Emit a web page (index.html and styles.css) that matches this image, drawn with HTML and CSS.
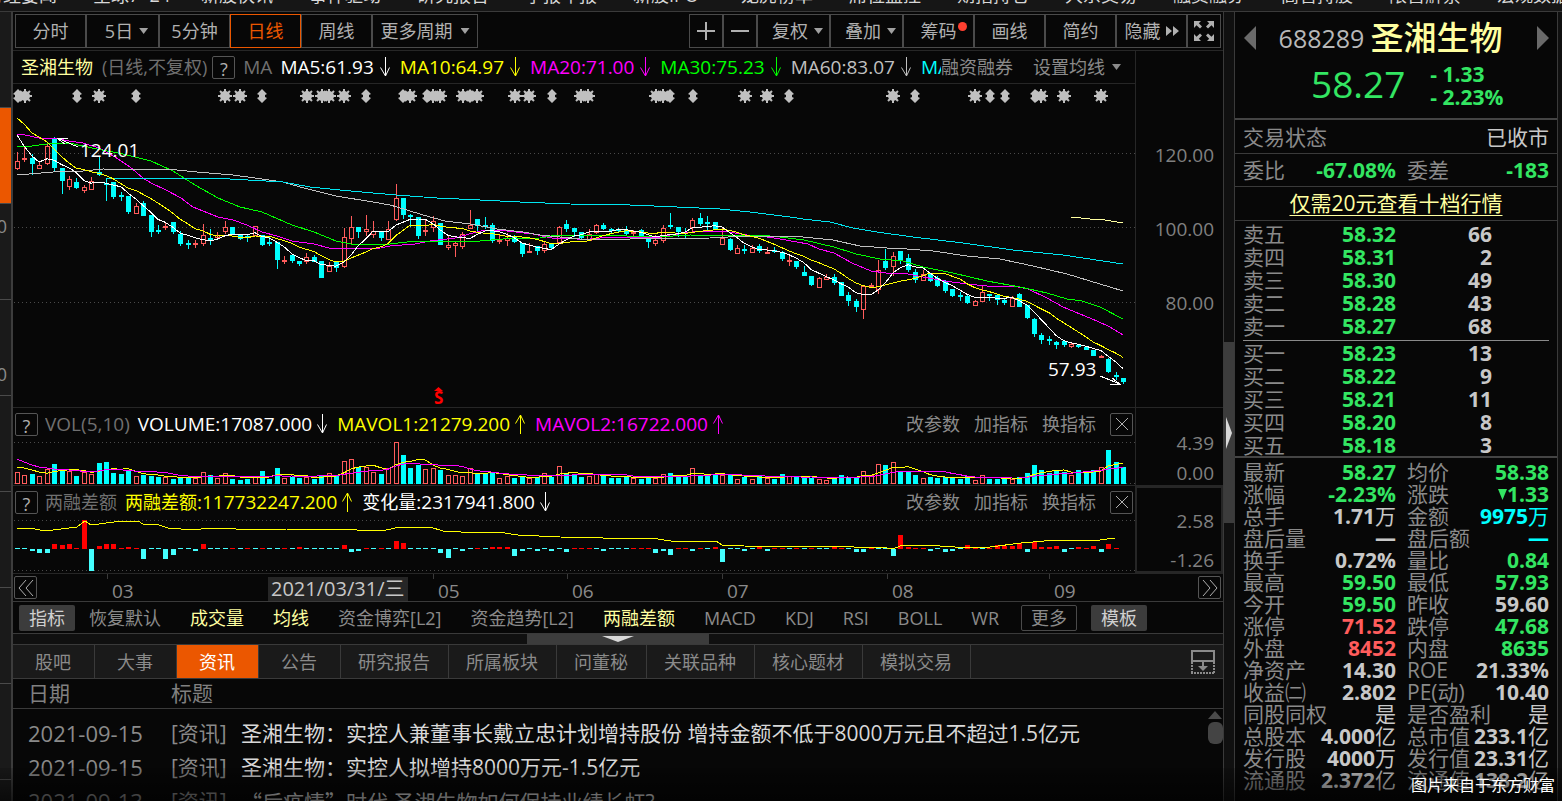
FILE: index.html
```html
<!DOCTYPE html>
<html lang="zh-CN">
<head>
<meta charset="utf-8">
<title>圣湘生物 688289</title>
<link rel="stylesheet" href="styles.css">
</head>
<body>
<svg class="defs" aria-hidden="true">
  <symbol id="down" viewBox="0 0 10 20"><path d="M5.5 0V19M.5 10.500L5.500 19L9.500 10.500"/></symbol>
  <symbol id="up" viewBox="0 0 10 20"><path d="M5.500 20V1M.5 9.500L5.500 1L9.500 9.500"/></symbol>
</svg>
<nav class="topnav">
  <a href="#">财经要闻</a><a href="#">全球7×24</a><a href="#">新股快讯</a><a href="#">事件驱动</a><a href="#">研究报告</a><a href="#">季报年报</a><a href="#">新股IPO</a><a href="#">龙虎榜单</a><a href="#">席位监控</a><a href="#">期指持仓</a><a href="#">大宗交易</a><a href="#">融资融券</a><a href="#">高管持股</a><a href="#">限售解禁</a><a href="#">宏观数据</a>
</nav>
<div class="app">
  <aside class="rail"><i></i><i class="on"></i><i>0</i><i class="low">0</i><i></i><i></i><i></i><i></i></aside>

  <main class="main">
    <div class="toolbar">
      <div class="group">
        <button class="tb">分时</button>
        <button class="tb wide">5日<span class="caret"></span></button>
        <button class="tb">5分钟</button>
        <button class="tb active">日线</button>
        <button class="tb">周线</button>
        <button class="tb more">更多周期<span class="caret"></span></button>
      </div>
      <div class="group">
        <button class="tb sq" aria-label="放大"><svg width="18" height="18"><path d="M9 0V18M0 9H18"/></svg></button>
        <button class="tb sq" aria-label="缩小"><svg width="18" height="18"><path d="M0 9H18"/></svg></button>
        <button class="tb wide">复权<span class="caret"></span></button>
        <button class="tb wide">叠加<span class="caret"></span></button>
        <button class="tb">筹码<span class="dot"></span></button>
        <button class="tb">画线</button>
        <button class="tb">简约</button>
        <button class="tb hide">隐藏<svg class="ff" width="14" height="12"><path d="M1 1L7 6L1 11zM8 1L14 6L8 11z"/></svg></button>
        <button class="tb sq" aria-label="全屏"><svg class="full" width="20" height="20"><path d="M0 0H7L4.800 2.200L8 5.400L6 7.400L2.500 4.300L0 7zM20 0H13L15.200 2.200L12 5.400L14 7.400L17.500 4.300L20 7zM0 20H7L4.800 17.800L8 14.600L6 12.600L2.500 15.700L0 13zM20 20H13L15.200 17.800L12 14.600L14 12.600L17.500 15.700L20 13z"/></svg></button>
      </div>
    </div>

    <section class="panel price">
      <div class="plot">
        <div class="info">
          <span class="name">圣湘生物</span><span class="mode">(日线,不复权)</span>
          <button class="box">?</button>
          <div class="series">
            <span class="lab">MA</span>
            <span class="c-white">MA5:61.93<svg class="ar"><use href="#down"/></svg></span>
            <span class="c-yellow">MA10:64.97<svg class="ar"><use href="#down"/></svg></span>
            <span class="c-magenta">MA20:71.00<svg class="ar"><use href="#down"/></svg></span>
            <span class="c-green">MA30:75.23<svg class="ar"><use href="#down"/></svg></span>
            <span class="c-grey">MA60:83.07<svg class="ar"><use href="#down"/></svg></span>
            <span class="c-cyan">MA120</span>
          </div>
          <a href="#">融资融券</a><a href="#" class="setma">设置均线<span class="caret"></span></a>
        </div>
        <svg id="price" class="chart" viewBox="13 84 1122 323"></svg>
      </div>
      <div class="axis a1"><span>120.00</span><span>100.00</span><span>80.00</span></div>
    </section>

    <section class="panel">
      <div class="plot">
        <div class="info sub">
          <button class="box">?</button>
          <div class="series">
            <span class="lab">VOL(5,10)</span>
            <span class="c-white">VOLUME:17087.000<svg class="ar"><use href="#down"/></svg></span>
            <span class="c-yellow">MAVOL1:21279.200<svg class="ar"><use href="#up"/></svg></span>
            <span class="c-magenta">MAVOL2:16722.000<svg class="ar"><use href="#up"/></svg></span>
          </div>
          <a href="#">改参数</a><a href="#">加指标</a><a href="#">换指标</a>
          <button class="box" aria-label="关闭"><svg width="12" height="12"><path d="M0 0L12 12M12 0L0 12"/></svg></button>
        </div>
        <svg id="volume" class="chart" viewBox="13 440 1122 45"></svg>
      </div>
      <div class="axis a2"><span>4.39</span><span>0.00</span></div>
    </section>

    <section class="panel">
      <div class="plot">
        <div class="info sub">
          <button class="box">?</button>
          <div class="series">
            <span class="lab cn">两融差额</span>
            <span class="c-yellow"><span class="cn">两融差额</span>:117732247.200<svg class="ar"><use href="#up"/></svg></span>
            <span class="c-white"><span class="cn">变化量</span>:2317941.800<svg class="ar"><use href="#down"/></svg></span>
          </div>
          <a href="#">改参数</a><a href="#">加指标</a><a href="#">换指标</a>
          <button class="box" aria-label="关闭"><svg width="12" height="12"><path d="M0 0L12 12M12 0L0 12"/></svg></button>
        </div>
        <svg id="margin" class="chart" viewBox="13 518 1122 55"></svg>
      </div>
      <div class="axis a3"><span>2.58</span><span>-1.26</span></div>
    </section>

    <div class="dates">
      <div class="first"><button class="pg" aria-label="向前"><svg width="16" height="16"><path d="M8 0L1 8L8 16M15 0L8 8L15 16"/></svg></button></div>
      <span class="tick">03</span><div><span class="today">2021/03/31/三</span></div>
      <span class="tick">05</span><span class="tick">06</span><span class="tick">07</span><span class="tick">08</span>
      <div class="tick last">09<button class="pg" aria-label="向后"><svg width="16" height="16"><path d="M1 0L8 8L1 16M8 0L15 8L8 16"/></svg></button></div>
    </div>

    <div class="inds">
      <button class="solid">指标</button>
      <a href="#">恢复默认</a><a href="#" class="on">成交量</a><a href="#" class="on">均线</a><a href="#">资金博弈[L2]</a><a href="#">资金趋势[L2]</a><a href="#" class="on">两融差额</a><a href="#">MACD</a><a href="#">KDJ</a><a href="#">RSI</a><a href="#">BOLL</a><a href="#">WR</a>
      <button class="line">更多</button>
      <button class="solid">模板</button>
    </div>
    <div class="hsplit"><span><svg width="32" height="6"><path d="M0 0H32L16 6z"/></svg></span></div>

    <div class="tabs">
      <button>股吧</button><button>大事</button><button class="on">资讯</button><button>公告</button><button>研究报告</button><button>所属板块</button><button>问董秘</button><button>关联品种</button><button>核心题材</button><button>模拟交易</button>
      <svg class="dock" width="24" height="24"><path d="M1 1H23V11H1z" stroke-width="2"/><path d="M1 12V24M23 12V24M0 23H24" stroke-width="2" stroke-dasharray="2 1"/><path d="M12 11V17" stroke-width="2"/><path class="fill" d="M7 16H17L12 21z"/></svg>
    </div>
    <div class="news">
      <table>
        <thead><tr><th class="d">日期</th><th class="k">标题</th><th></th></tr></thead>
        <tbody>
          <tr><td class="d">2021-09-15</td><td class="k">[资讯]</td><td><a href="#">圣湘生物：实控人兼董事长戴立忠计划增持股份 增持金额不低于8000万元且不超过1.5亿元</a></td></tr>
          <tr><td class="d">2021-09-15</td><td class="k">[资讯]</td><td><a href="#">圣湘生物：实控人拟增持8000万元-1.5亿元</a></td></tr>
          <tr><td class="d">2021-09-13</td><td class="k">[资讯]</td><td><a href="#"><span class="quo">“后疫情”</span>时代 圣湘生物如何保持业绩长虹?</a></td></tr>
        </tbody>
      </table>
      <div class="scroll"><svg width="14" height="8"><path d="M7 0L14 8H0z"/></svg><span></span></div>
    </div>
  </main>

  <div class="vsplit"><span><svg width="6" height="32"><path d="M0 0L6 16L0 32z"/></svg></span></div>

  <aside class="quote">
    <header class="qhead">
      <div class="title">
        <button class="nav" aria-label="上一只"><svg width="12" height="24"><path d="M12 0V24L0 12z"/></svg></button>
        <span><span class="code">688289</span><span class="big">圣湘生物</span></span>
        <button class="nav" aria-label="下一只"><svg width="12" height="24"><path d="M0 0V24L12 12z"/></svg></button>
      </div>
      <div class="now"><span class="last-price">58.27</span><span class="chg">- 1.33<br>- 2.23%</span></div>
    </header>
    <div class="qbody">
      <div class="row"><span>交易状态</span><span class="v">已收市</span></div>
      <div class="row pairs"><div><span>委比</span><b class="g">-67.08%</b></div><div><span>委差</span><b class="g">-183</b></div></div>
      <div class="row promo"><a href="#">仅需20元查看十档行情</a></div>
      <table class="book">
        <tbody>
          <tr><td>卖五</td><td class="g">58.32</td><td>66</td></tr>
          <tr><td>卖四</td><td class="g">58.31</td><td>2</td></tr>
          <tr><td>卖三</td><td class="g">58.30</td><td>49</td></tr>
          <tr><td>卖二</td><td class="g">58.28</td><td>43</td></tr>
          <tr><td>卖一</td><td class="g">58.27</td><td>68</td></tr>
        </tbody>
      </table>
      <hr>
      <table class="book buy">
        <tbody>
          <tr><td>买一</td><td class="g">58.23</td><td>13</td></tr>
          <tr><td>买二</td><td class="g">58.22</td><td>9</td></tr>
          <tr><td>买三</td><td class="g">58.21</td><td>11</td></tr>
          <tr><td>买四</td><td class="g">58.20</td><td>8</td></tr>
          <tr><td>买五</td><td class="g">58.18</td><td>3</td></tr>
        </tbody>
      </table>
      <dl class="stats">
        <div><dt>最新</dt><dd class="g">58.27</dd></div><div><dt>均价</dt><dd class="g">58.38</dd></div>
        <div><dt>涨幅</dt><dd class="g">-2.23%</dd></div><div><dt>涨跌</dt><dd class="g"><svg width="9" height="11"><path d="M0 0H9L4.500 11z"/></svg>1.33</dd></div>
        <div><dt>总手</dt><dd>1.71<i>万</i></dd></div><div><dt>金额</dt><dd class="c">9975<i>万</i></dd></div>
        <div><dt>盘后量</dt><dd>—</dd></div><div><dt>盘后额</dt><dd class="c">—</dd></div>
        <div><dt>换手</dt><dd>0.72%</dd></div><div><dt>量比</dt><dd class="g">0.84</dd></div>
        <div><dt>最高</dt><dd class="g">59.50</dd></div><div><dt>最低</dt><dd class="g">57.93</dd></div>
        <div><dt>今开</dt><dd class="g">59.50</dd></div><div><dt>昨收</dt><dd>59.60</dd></div>
        <div><dt>涨停</dt><dd class="r">71.52</dd></div><div><dt>跌停</dt><dd class="g">47.68</dd></div>
        <div><dt>外盘</dt><dd class="r">8452</dd></div><div><dt>内盘</dt><dd class="g">8635</dd></div>
        <div><dt>净资产</dt><dd>14.30</dd></div><div><dt>ROE</dt><dd>21.33%</dd></div>
        <div><dt>收益㈡</dt><dd>2.802</dd></div><div><dt>PE(动)</dt><dd>10.40</dd></div>
        <div><dt>同股同权</dt><dd><i>是</i></dd></div><div><dt>是否盈利</dt><dd><i>是</i></dd></div>
        <div><dt>总股本</dt><dd>4.000<i>亿</i></dd></div><div><dt>总市值</dt><dd>233.1<i>亿</i></dd></div>
        <div><dt>发行股</dt><dd>4000<i>万</i></dd></div><div><dt>发行值</dt><dd>23.31<i>亿</i></dd></div>
        <div><dt>流通股</dt><dd>2.372<i>亿</i></dd></div><div><dt>流通值</dt><dd>138.2<i>亿</i></dd></div>
      </dl>
    </div>
  </aside>
  <div class="edge"></div>
</div>
<div class="shade"></div>
<div class="credit">图片来自于东方财富</div>
<script src="charts.js"></script>
</body>
</html>
```

FILE: styles.css
```css
* { box-sizing: border-box; }
html, body { height: 100%; }
body {
  margin: 0;
  overflow: hidden;
  display: flex;
  flex-direction: column;
  position: relative;
  background: #070707;
  color: #8a8a8a;
  font: 18px/24px "Open Sans", "Noto Sans CJK SC", sans-serif;
}
a { color: inherit; text-decoration: none; }
button {
  margin: 0;
  padding: 0;
  border: 0;
  background: none;
  color: inherit;
  font: inherit;
  white-space: nowrap;
}
svg { display: block; flex: none; fill: none; stroke: currentColor; }
.defs { position: absolute; width: 0; height: 0; }

.topnav {
  flex: none;
  display: flex;
  align-items: flex-end;
  gap: 36px;
  height: 12px;
  padding-bottom: 4px;
  overflow: hidden;
  background: #161616;
  border-bottom: 1px solid #3a3a3a;
  color: #d8d8d8;
}
.topnav a { flex: none; width: 72px; white-space: nowrap; }
.topnav a:first-child { margin-left: -15px; }

.app { flex: 1; min-height: 0; display: flex; overflow: hidden; }

.rail { flex: none; width: 13px; background: #1a1a1a; border-right: 2px solid #3c3c3c; overflow: hidden; }
.rail i {
  display: block;
  height: 96px;
  padding-top: 10px;
  border-bottom: 1px solid #4a4a4a;
  font-style: normal;
  direction: rtl;
  padding-right: 4px;
}
.rail .low { padding-top: 62px; }
.rail .on { background: #eb5700; }

.main { flex: 1; min-width: 0; }

.toolbar {
  display: flex;
  justify-content: space-between;
  padding: 2px;
  height: 39px;
  border-bottom: 1px solid #262626;
}
.group { display: flex; }
.tb {
  display: flex;
  align-items: center;
  justify-content: center;
  position: relative;
  width: 71px;
  height: 34px;
  border: 1px solid #4a4a4a;
  color: #b0b0b0;
}
.tb svg { stroke-width: 2; }
.tb .full, .tb .ff { fill: currentColor; stroke: none; }
.tb.wide { width: 73px; gap: 6px; padding-left: 8px; }
.tb.more { width: 106px; gap: 8px; }
.tb.sq { width: 34px; }
.tb.hide { gap: 4px; }
.tb.active { border-color: #eb5700; color: #eb5700; }
.caret {
  width: 9px;
  height: 6px;
  background: #a0a0a0;
  clip-path: polygon(0 0, 100% 0, 50% 100%);
}
.dot {
  position: absolute;
  top: 7px;
  right: 6px;
  width: 9px;
  height: 9px;
  border-radius: 50%;
  background: #ff4030;
}

.panel { display: flex; border-bottom: 1px solid #262626; }
.plot { flex: 1; min-width: 0; }
.info {
  display: flex;
  align-items: center;
  height: 33px;
  padding: 0 14px 0 8px;
  border-bottom: 1px solid #262626;
  font-size: 18px;
  white-space: nowrap;
}
.info.sub { height: 32px; padding: 0 2px; border-bottom: 0; gap: 14px; }
.name { color: #ffffa0; }
.mode { margin: 0 5px 0 9px; color: #707070; }
.box {
  flex: none;
  display: grid;
  place-items: center;
  width: 23px;
  height: 23px;
  border: 1px solid #555;
  border-radius: 2px;
  color: #b0b0b0;
}
.series {
  flex: 1;
  min-width: 0;
  display: flex;
  gap: 10px;
  margin-left: 8px;
  overflow: hidden;
  font-size: 19px;
}
.sub .series { margin-left: -7px; }
.series > span { flex: none; display: flex; align-items: center; }
.cn { font-size: 18px; }
.lab { color: #707070; margin-right: -2px; }
.ar { width: 10px; height: 20px; margin-left: 6px; }
.sub .ar { margin-left: 5px; }
.setma { display: flex; align-items: center; gap: 7px; margin-left: 20px; }
.setma .caret { background: #8a8a8a; }
.c-white { color: #fff; }
.c-yellow { color: #ff0; }
.c-magenta { color: #f0f; }
.c-green { color: #0f0; }
.c-grey { color: #c0c0c0; }
.c-cyan { color: #0ff; }

.chart { width: 100%; height: auto; }
.chart text { fill: #fff; stroke: none; font-size: 19px; }
.chart .crisp { shape-rendering: crispEdges; }
.chart .grid { stroke: #4a4a4a; stroke-dasharray: 1 3; }
.chart .note { stroke: #fff; }
.chart .mark { fill: #c0c0c0; stroke: none; }
.chart .spoke { stroke: #c0c0c0; }
.chart .ex { fill: #f00; font-size: 17px; font-weight: 700; }
.chart .up { stroke: #ff5c5c; }
.chart .dn { stroke: #0ff; fill: #0ff; }
.chart .pos { fill: #f00; stroke: none; }
.chart .neg { fill: #4ff; stroke: none; }

.axis {
  flex: none;
  display: flex;
  flex-direction: column;
  width: 88px;
  padding-right: 9px;
  border-left: 1px solid #262626;
  font-size: 19px;
  text-align: right;
  color: #808080;
}
.a1 { padding-top: 92px; gap: 50px; }
.a2 { padding-top: 23px; gap: 6px; }
.a3 { padding-top: 23px; gap: 19px; padding-right: 7px; border: 2px solid #262626; line-height: 20px; }

.dates {
  display: grid;
  grid-template-columns: 94fr 161fr 165fr 134fr 155fr 165fr 162fr 174fr;
  height: 28px;
  border-bottom: 1px solid #3a3a3a;
  font-size: 19px;
}
.tick {
  padding: 5px 0 0 5px;
  background: linear-gradient(#3a3a3a, #3a3a3a) 0 0 / 1px 5px no-repeat;
}
.today {
  display: inline-block;
  margin-top: 3px;
  height: 24px;
  line-height: 24px;
  padding: 0 3px;
  font-size: 20px;
  background: #262626;
  color: #c8c8c8;
}
.first { padding: 2px 1px; }
.last { display: flex; justify-content: space-between; padding: 5px 2px 0 5px; }
.pg {
  display: grid;
  place-items: center;
  width: 23px;
  height: 23px;
  border: 1px solid #555;
  border-radius: 2px;
  color: #b0b0b0;
}
.last .pg { margin-top: -3px; }

.inds {
  display: flex;
  align-items: center;
  gap: 29px;
  height: 32px;
  padding-left: 6px;
  border-bottom: 1px solid #3a3a3a;
  white-space: nowrap;
}
.inds .on { color: #ffffa0; }
.inds button { width: 56px; height: 26px; border-radius: 2px; }
.solid { background: #3c3c3c; color: #d0d0d0; }
.solid + a, .line + .solid { margin-left: -15px; }
.line { margin-left: -7px; border: 1px solid #4a4a4a; }

.hsplit { display: flex; justify-content: center; height: 11px; background: #101010; border-bottom: 1px solid #3a3a3a; }
.hsplit span { display: flex; justify-content: center; width: 15%; padding-top: 2px; background: #3c3c3c; }
.hsplit svg, .vsplit svg { fill: #d8d8d8; stroke: none; }

.tabs { display: flex; align-items: center; height: 34px; background: #1a1a1a; border-bottom: 1px solid #3a3a3a; }
.tabs button { height: 33px; min-width: 82px; padding: 0 18px 0 17px; border-right: 1px solid #3a3a3a; }
.tabs .on { background: #eb5700; color: #fff; }
.dock { margin: 0 8px 0 auto; }
.dock .fill { fill: currentColor; stroke: none; }

.news { display: flex; font-size: 21px; }
.news table { flex: 1; border-collapse: collapse; white-space: nowrap; }
.news th, .news td { padding: 0; height: 34px; text-align: left; font-weight: 400; }
.news thead { border-bottom: 1px solid #3a3a3a; }
.news th { height: 29px; color: #808080; }
.news tbody tr:first-child td { height: 42px; padding-top: 8px; }
.news td.d { font-size: 22px; }
.news .d { width: 158px; padding-left: 15px; }
.news .k { width: 70px; }
.news td a { color: #d8d8d8; }
.quo { font-family: "Noto Sans CJK SC", sans-serif; }
.scroll { width: 15px; margin: 32px 0 0 -15px; }
.scroll svg { fill: #4a4a4a; stroke: none; }
.scroll span { display: block; height: 22px; margin-top: 3px; border-radius: 6px; background: #444; }

.vsplit {
  flex: none;
  width: 12px;
  padding-top: 330px;
  background: #101010;
  border: 1px solid #3a3a3a;
  border-width: 0 1px;
}
.vsplit span { display: flex; align-items: center; justify-content: center; height: 181px; background: #3c3c3c; }

.quote { flex: none; width: 323px; font-size: 21px; background: #070707; border-right: 1px solid #3a3a3a; }
.qhead { height: 108px; border-bottom: 2px solid #444; }
.title { display: flex; align-items: center; justify-content: space-between; height: 51px; padding: 0 8px 0 9px; }
.title > span { display: flex; align-items: center; gap: 6px; margin-right: 12px; }
.nav svg { fill: #6a6a6a; stroke: none; }
.code { font-size: 25px; color: #b8b8b8; }
.big { font-size: 33px; font-weight: 500; line-height: 48px; color: #ffffa0; }
.now { display: flex; align-items: center; gap: 25px; padding-left: 76px; }
.last-price { font-size: 37px; line-height: 40px; padding-bottom: 4px; color: #33e562; font-weight: 500; }
.chg { font-weight: 700; line-height: 23px; color: #33e562; }
.row {
  display: flex;
  align-items: center;
  justify-content: space-between;
  height: 33px;
  padding: 0 8px;
  border-bottom: 1px solid #3a3a3a;
}
.row:first-child { height: 34px; }
.row .v { color: #c8c8c8; }
.row.promo { justify-content: center; height: 34px; padding-bottom: 2px; }
.promo a { color: #ffffa0; text-decoration: underline; text-underline-offset: 4px; text-decoration-thickness: 1px; }
.pairs, .stats { display: grid; grid-template-columns: 153fr 142fr; column-gap: 11px; }
.pairs div, .stats div { display: flex; justify-content: space-between; }
.book { width: calc(100% - 73px); margin-left: 8px; border-collapse: collapse; table-layout: fixed; line-height: 23px; }
.book td { padding: 0; text-align: right; font-weight: 700; color: #c8c8c8; }
.book td:first-child { width: 62px; text-align: left; font-weight: 400; color: #8a8a8a; }
.book td:nth-child(2) { width: 91px; }
.book:not(.buy) { margin-top: 2px; }
.qbody hr { height: 1px; margin: 2px 8px 1px; border: 0; background: #8a8a8a; }
.buy { margin-bottom: -1px; }
.stats { margin: 0; padding: 3px 8px 0; border-top: 2px solid #444; line-height: 22px; }
.stats dd { display: flex; align-items: center; margin: 0; font-weight: 700; color: #c8c8c8; }
.stats i { font-style: normal; font-weight: 400; }
.stats svg { fill: currentColor; stroke: none; }
.quote .g { color: #33e562; }
.quote .r { color: #ff5c5c; }
.quote .c { color: #0ff; }
.edge { flex: none; width: 4px; background: #101010; }

.shade {
  position: absolute;
  inset: auto 0 0 0;
  height: 33px;
  background: linear-gradient(rgba(0, 0, 0, .15), rgba(0, 0, 0, .6));
  pointer-events: none;
}
.credit { position: absolute; right: 7px; bottom: 4px; font-size: 16px; color: #fff; }
```

FILE: charts.js
```js
// Each candle: direction, then high, body top, body bottom and low in chart units.
const candles = `R152,161,169,170 R147,158,159,162 C154,158,164,175 R161,165,169,169 R142,146,164,165 C137,138,168,171 C168,168,181,194 R176,179,187,190 C178,182,188,189 R185,187,191,193
R177,181,190,190 C157,172,175,176 C178,183,185,201 C182,182,197,199 C192,195,196,201 C196,196,212,214 R203,206,214,214 C201,203,216,216 C215,215,232,237 C225,230,231,234
R223,226,228,230 C222,222,232,234 C231,234,244,246 C240,243,244,249 R240,243,244,248 R224,235,244,246 C229,238,239,245 R232,235,238,238 R221,227,232,234 C227,227,235,235
C235,235,239,240 C235,236,237,242 R226,226,236,236 C235,235,245,246 C237,242,243,246 C242,242,260,269 R256,260,261,264 C255,255,261,263 C261,261,264,266 R253,257,262,264
C255,257,262,262 C261,261,278,278 R262,266,272,272 C261,261,268,272 R228,237,267,268 R216,227,239,245 C227,227,232,238 R215,229,232,236 R221,231,235,238 C231,231,238,241
R221,229,240,240 R184,198,220,221 C198,198,215,219 C214,215,217,227 C217,217,236,239 R219,230,231,236 R216,221,228,232 C223,223,245,245 R236,245,248,250 R242,243,246,257
R232,234,247,249 R210,225,229,229 C219,219,226,231 C217,225,227,229 C223,225,241,243 R235,240,241,244 R233,238,241,246 C235,237,242,243 C243,243,254,257 R243,251,252,252
C246,246,251,255 R242,244,251,253 C243,243,248,249 R226,227,243,243 C220,224,229,232 C228,228,232,237 C232,232,238,239 R229,234,241,241 R224,225,233,234 C223,225,229,230
C228,229,230,234 C228,229,230,233 C226,230,234,235 R230,232,234,236 C229,230,236,237 C239,239,242,248 R235,240,244,246 R225,228,241,243 C213,225,227,229 C227,227,232,237
C228,232,233,238 R218,220,228,232 C213,218,224,226 C216,222,223,230 C222,222,229,230 R227,238,245,245 C238,239,250,251 R245,248,254,254 C245,249,251,254 R245,248,253,253
C244,246,251,253 R247,252,253,253 C247,250,252,253 C251,252,259,261 R256,260,262,266 C261,261,267,269 C266,272,276,276 C276,276,285,286 R277,278,288,288 R274,277,280,280
C274,277,283,285 C282,282,296,296 C292,295,301,306 C299,301,307,312 R285,286,310,319 R283,285,287,288 R260,270,290,294 C249,261,268,270 R252,256,267,276 C251,251,260,264
C254,258,270,272 C269,272,280,283 R270,274,281,281 C273,274,281,282 C276,278,286,287 C280,281,291,293 C289,289,296,297 C292,295,296,301 C295,296,303,304 R300,301,306,306
R286,292,302,302 C294,294,295,301 C295,295,300,305 C299,300,303,305 R296,298,307,307 C293,294,307,307 C305,305,318,319 C318,319,334,337 C333,335,340,344 C336,339,340,345
C341,342,345,349 C341,341,345,347 R343,344,347,348 C344,345,347,348 C346,347,350,350 C350,350,356,356 R355,356,358,358 C358,359,372,373 C372,375,377,380 C378,378,382,384`
  .split(/\s+/).map(s => [s[0], ...s.slice(1).split(',').map(Number)]);

const volumes = [12,9,10,8,15,20,15,13,8,12,10,21,22,11,10,13,8,9,8,7,7,5,7,6,6,12,9,6,11,5,4,5,8,13,5,16,6,7,6,7,5,9,11,8,23,25,17,17,12,10,16,42,29,16,19,15,16,14,9,9,8,16,10,11,11,6,8,6,7,6,7,11,7,18,11,10,7,8,10,9,6,6,7,6,5,7,6,10,11,8,7,16,9,9,9,9,10,5,7,5,8,6,5,10,8,8,7,6,5,4,7,9,6,7,13,9,20,19,22,13,12,9,6,7,6,7,6,5,8,4,9,5,5,6,5,7,11,19,14,11,14,12,9,14,11,14,17,34,22,17];

const flows = [-1,-1,-2,-4,-4,5,4,5,1,29,-22,3,5,5,1,2,1,-10,-1,-1,-10,-6,-1,-1,-2,5,-1,-1,-1,1,-1,1,-1,1,-1,-1,1,-1,2,-1,-1,-1,-1,-1,4,-3,-2,1,-1,1,-1,8,6,-1,-1,-1,-1,-4,-9,-1,-2,-1,1,-1,2,2,2,-7,-2,-1,-2,-1,-2,-1,-3,1,1,1,-1,-2,-1,-1,-1,1,1,1,-4,-2,-6,1,1,-2,1,-1,2,-13,-1,-1,-2,-1,3,-2,1,1,-1,1,-1,1,-1,-1,3,1,-1,-3,-3,1,-1,-1,-7,14,2,1,1,-2,-1,-3,-2,-1,4,1,-1,1,4,3,3,6,-3,7,2,2,3,-3,-1,2,1,3,-3,5,1];

const lines = {
  ma20: ['#f0f', '17,134 25,135 39,138 54,138 69,141 83,143 99,148 115,157 130,167 143,178 151,183 166,190 181,198 193,207 203,211 218,217 233,220 247,225 262,232 277,236 292,241 314,244 329,248 344,249 381,248 390,246 415,244 430,241 455,238 473,233 485,230 507,231 533,234 552,238 577,239 590,239 610,237 630,237 657,238 670,235 693,232 723,231 747,235 767,237 780,239 797,242 808,244 819,249 834,253 852,263 871,271 886,273 903,273 923,277 945,281 967,284 987,286 1013,286 1028,289 1047,298 1063,307 1080,314 1097,321 1110,327 1123,335'],
  ma30: ['#0f0', '17,147 32,146 47,144 69,143 97,149 123,154 151,161 173,171 195,185 218,198 240,207 262,212 292,225 314,232 336,241 351,244 373,245 390,244 407,242 430,241 480,241 503,239 540,238 557,235 610,235 643,237 673,236 690,235 770,236 780,237 804,240 834,247 856,254 880,259 903,261 923,267 953,273 987,281 1020,287 1047,293 1067,299 1082,301 1100,307 1123,319'],
  ma60: ['#c0c0c0', '17,175 53,172 83,171 103,169 177,170 197,172 233,175 255,178 283,182 300,187 336,196 373,202 390,205 407,210 423,215 445,221 470,224 487,227 497,229 523,232 540,235 580,239 630,239 710,238 747,236 783,236 803,237 833,240 860,246 887,248 907,249 933,251 967,256 1000,259 1033,266 1067,274 1100,284 1123,291'],
  ma120: ['#00e5f0', '107,178 147,178 230,179 283,182 310,187 340,190 373,193 396,195 437,198 480,200 520,202 570,204 630,205 677,207 720,209 750,212 790,217 803,219 830,222 853,228 877,232 913,237 963,243 1013,250 1063,255 1123,264'],
  ma240: ['#ffffa0', '1071,217 1090,219 1105,220 1123,223']
};
const balance = '17,528 29,528 46,531 61,529 77,527 85,521 91,525 114,522 138,521 143,524 159,525 168,528 193,530 209,528 236,529 286,529 329,530 345,529 357,530 386,530 400,527 430,527 443,531 479,533 498,532 518,535 560,537 603,538 651,538 671,541 716,541 722,545 744,546 814,547 832,546 854,547 887,548 893,549 900,546 924,545 955,547 990,547 1021,543 1056,540 1100,540 1115,538';

const x = i => Math.round(17 + i * 7.423);
const average = (data, n, seed) => data.map((_, i) =>
  i < seed.length ? seed[i] : data.slice(i - n + 1, i + 1).reduce((a, b) => a + b) / n);
const poly = (pts, color) => `<polyline class="crisp" stroke="${color}" points="${pts}"/>`;
const series = (ys, color) => poly(ys.map((y, i) => `${x(i)},${y.toFixed(1)}`).join(' '), color);
const grid = y => `<path class="grid crisp" d="M14 ${y}.500H1135"/>`;

// Price chart
const star = cx => `<circle class="mark" cx="${cx}" cy="96" r="5"/><path class="spoke" stroke-width="2" d="M${cx - 7} 96H${cx + 7}M${cx} 89V103M${cx - 5} 91L${cx + 5} 101M${cx + 5} 91L${cx - 5} 101"/>`;
const swing = cx => `<path class="mark" d="M${cx} 89L${cx + 5} 94L${cx + 3} 95V97L${cx + 5} 98L${cx} 103L${cx - 5} 98L${cx - 3} 97V95L${cx - 5} 94z"/>`;
const closes = candles.map(c => c[0] === 'R' ? c[2] : c[3]);
document.getElementById('price').innerHTML =
  grid(153) + grid(227) + grid(302) +
  [25,99,225,240,307,322,329,344,410,433,440,463,477,515,529,581,588,656,663,745,767,893,975,1041,1064,1101].map(star).join('') +
  [18,77,136,262,366,403,427,470,552,670,693,789,915,990,1005,1035].map(swing).join('') +
  candles.map(([d, h, t, b, l], i) => {
    const c = x(i) + .5;
    const height = Math.max(b - t - 1, 0);
    return `<g class="crisp ${d === 'R' ? 'up' : 'dn'}"><path d="M${c} ${h}V${t}M${c} ${b}V${l}"/><rect x="${c - 2}" y="${t + .5}" width="4" height="${height || 1}"/></g>`;
  }).join('') +
  Object.values(lines).map(([color, pts]) => poly(pts, color)).join('') +
  series(average(closes, 10, [118,124,133,137,142,149,157,163,168]), '#ff0') +
  series(average(closes, 5, [135,146,156,162]), '#fff') +
  '<path class="note crisp" d="M57 138L78 147M57 138H68M57 138L65 144M1100 376L1120 384M1110 384H1121M1112 378L1120 384"/>' +
  '<text x="80" y="157">124.01</text><text x="1048" y="376">57.93</text>' +
  '<text class="ex" x="434" y="404">S</text><path class="pos" d="M438.500 387L443 391H434z"/>';

// Volume chart
document.getElementById('volume').innerHTML = grid(442) + grid(483) +
  volumes.map((v, i) => `<rect class="crisp ${candles[i][0] === 'R' ? 'up' : 'dn'}" x="${x(i) - 1.5}" y="${484.5 - v}" width="4" height="${v - 1}"/>`).join('') +
  series(average(volumes, 5, [17,16,14,12]).map(v => 484 - v), '#ff0') +
  series(average(volumes, 10, [25,22,19,17,16,15,15,14,14]).map(v => 484 - v), '#f0f');

// Margin balance chart
document.getElementById('margin').innerHTML = grid(520) + grid(570) +
  flows.map((v, i) => `<rect class="crisp ${v > 0 ? 'pos' : 'neg'}" x="${x(i) - 2}" y="${v > 0 ? 549 - v : v === -1 ? 548 : 549}" width="5" height="${Math.abs(v)}"/>`).join('') +
  poly(balance, '#ff0');
```
